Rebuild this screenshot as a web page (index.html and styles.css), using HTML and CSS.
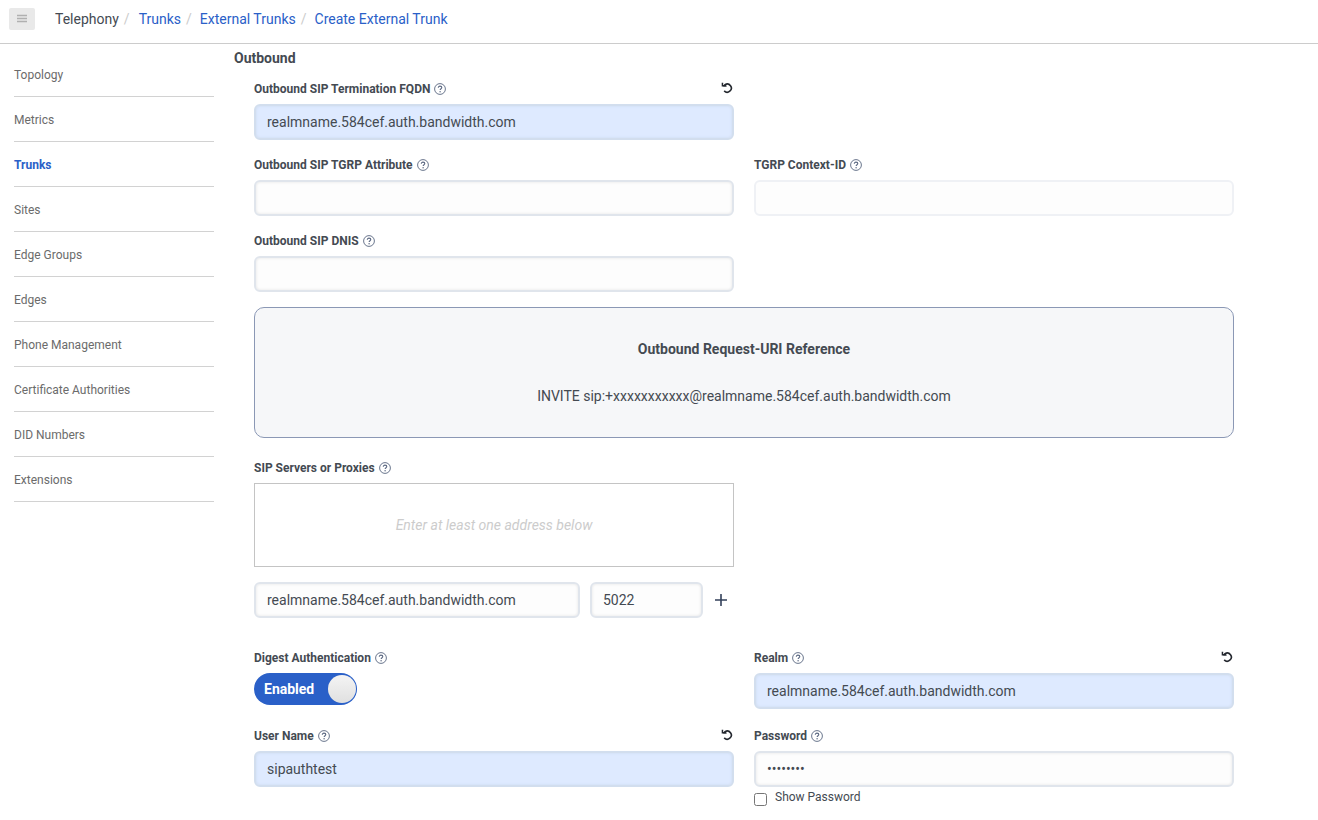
FILE: index.html
```html
<!DOCTYPE html>
<html lang="en">
<head>
<meta charset="utf-8">
<title>Create External Trunk</title>
<link rel="stylesheet" href="styles.css">
</head>
<body>
<svg class="sprite" aria-hidden="true">
  <symbol id="help" viewBox="0 0 12 12">
    <circle cx="6" cy="6" r="5.4" fill="none" stroke="currentColor" stroke-width="0.9"/>
    <path d="M4.3 4.8C4.3 3.7 5 3.1 6 3.1S7.8 3.7 7.8 4.6C7.8 5.7 6.1 5.8 6.1 7.1" fill="none" stroke="currentColor" stroke-width="1.1"/>
    <circle cx="6.1" cy="8.7" r="0.7" fill="currentColor"/>
  </symbol>
  <symbol id="undo" viewBox="0 0 12 12">
    <path d="M2.2 3.7H4.6L4 2.6A4.1 4.1 0 1 1 3.2 8.9" fill="none" stroke="currentColor" stroke-width="1.6"/>
    <path d="M0.7 0.8H2.2V3H4.9V4.6H0.7Z" fill="currentColor"/>
  </symbol>
</svg>
<header class="topbar">
  <button class="menu-button" type="button" aria-label="Menu">
    <svg viewBox="0 0 10 10" width="10" height="10"><path d="M0 1.5H10M0 4.5H10M0 7.5H10" stroke="currentColor" stroke-width="1.6"/></svg>
  </button>
  <nav aria-label="Breadcrumb">
    <ol class="breadcrumb">
      <li>Telephony</li>
      <li><a href="#">Trunks</a></li>
      <li><a href="#">External Trunks</a></li>
      <li><a href="#">Create External Trunk</a></li>
    </ol>
  </nav>
</header>
<div class="layout">
  <nav class="sidebar" aria-label="Telephony">
    <a href="#">Topology</a>
    <a href="#">Metrics</a>
    <a href="#" class="active" aria-current="page">Trunks</a>
    <a href="#">Sites</a>
    <a href="#">Edge Groups</a>
    <a href="#">Edges</a>
    <a href="#">Phone Management</a>
    <a href="#">Certificate Authorities</a>
    <a href="#">DID Numbers</a>
    <a href="#">Extensions</a>
  </nav>
  <main class="content">
    <h2 class="section-title">Outbound</h2>
    <form class="form">
      <div class="row">
        <div class="field">
          <div class="field-head">
            <label for="fqdn">Outbound SIP Termination FQDN</label>
            <svg class="help"><use href="#help"/></svg>
            <button class="reset" type="button" aria-label="Reset FQDN"><svg class="undo"><use href="#undo"/></svg></button>
          </div>
          <input id="fqdn" class="input changed" type="text" value="realmname.584cef.auth.bandwidth.com">
        </div>
      </div>
      <div class="row">
        <div class="field">
          <div class="field-head">
            <label for="tgrp">Outbound SIP TGRP Attribute</label>
            <svg class="help"><use href="#help"/></svg>
          </div>
          <input id="tgrp" class="input" type="text">
        </div>
        <div class="field">
          <div class="field-head">
            <label for="context">TGRP Context-ID</label>
            <svg class="help"><use href="#help"/></svg>
          </div>
          <input id="context" class="input" type="text" disabled>
        </div>
      </div>
      <div class="row">
        <div class="field">
          <div class="field-head">
            <label for="dnis">Outbound SIP DNIS</label>
            <svg class="help"><use href="#help"/></svg>
          </div>
          <input id="dnis" class="input" type="text">
        </div>
      </div>
      <section class="callout">
        <h3>Outbound Request-URI Reference</h3>
        <p>INVITE sip:+xxxxxxxxxxx@realmname.584cef.auth.bandwidth.com</p>
      </section>
      <div class="row servers">
        <div class="field">
          <div class="field-head">
            <label for="server">SIP Servers or Proxies</label>
            <svg class="help"><use href="#help"/></svg>
          </div>
          <div class="empty-list">Enter at least one address below</div>
          <div class="add-server">
            <input id="server" class="input" type="text" value="realmname.584cef.auth.bandwidth.com">
            <input class="input port" type="text" value="5022" aria-label="Port">
            <button class="add" type="button" aria-label="Add server">
              <svg viewBox="0 0 12 12" width="12" height="12"><path d="M6 0.5V11.5M0.5 6H11.5" stroke="currentColor" stroke-width="1.6" stroke-linecap="round"/></svg>
            </button>
          </div>
        </div>
      </div>
      <div class="row auth">
        <div class="field">
          <div class="field-head">
            <label for="digest">Digest Authentication</label>
            <svg class="help"><use href="#help"/></svg>
          </div>
          <button id="digest" class="toggle" type="button" role="switch" aria-checked="true">
            <span>Enabled</span><span class="knob"></span>
          </button>
        </div>
        <div class="field">
          <div class="field-head">
            <label for="realm">Realm</label>
            <svg class="help"><use href="#help"/></svg>
            <button class="reset" type="button" aria-label="Reset realm"><svg class="undo"><use href="#undo"/></svg></button>
          </div>
          <input id="realm" class="input changed" type="text" value="realmname.584cef.auth.bandwidth.com">
        </div>
      </div>
      <div class="row credentials">
        <div class="field">
          <div class="field-head">
            <label for="user">User Name</label>
            <svg class="help"><use href="#help"/></svg>
            <button class="reset" type="button" aria-label="Reset user name"><svg class="undo"><use href="#undo"/></svg></button>
          </div>
          <input id="user" class="input changed" type="text" value="sipauthtest">
        </div>
        <div class="field">
          <div class="field-head">
            <label for="password">Password</label>
            <svg class="help"><use href="#help"/></svg>
          </div>
          <input id="password" class="input" type="password" value="password">
          <div class="show-password">
            <input id="show" type="checkbox">
            <label for="show">Show Password</label>
          </div>
        </div>
      </div>
    </form>
  </main>
</div>
</body>
</html>
```
FILE: styles.css
```css
* { box-sizing: border-box; }

body {
  margin: 0;
  background: #fff;
  color: #444a52;
  font: 14px/20px Roboto, "Liberation Sans", sans-serif;
}

a { color: #2a60c8; text-decoration: none; }
button { padding: 0; border: 0; background: none; color: inherit; font: inherit; cursor: pointer; }
svg { display: block; }
.sprite { display: none; }

.topbar {
  display: flex;
  align-items: center;
  gap: 20px;
  padding: 8px 9px 13px;
  border-bottom: 1px solid #ccc;
}

.menu-button {
  display: grid;
  place-items: center;
  width: 26px;
  height: 22px;
  border-radius: 2px;
  background: #e9e9e9;
  color: #b0b0b0;
}

.breadcrumb { display: flex; margin: 0; padding: 0; list-style: none; }
.breadcrumb li + li::before { content: "/"; padding: 0 9px 0 5px; color: #ccc; }
.breadcrumb li + li + li::before { padding-right: 8px; }

.layout { display: flex; }

.sidebar { flex: 0 0 214px; padding: 8px 0 0 14px; }
.sidebar a {
  display: block;
  padding: 13px 0 11px;
  border-bottom: 1px solid #d2d2d2;
  color: #6b6b6b;
  font-size: 12px;
}
.sidebar .active { color: #2a60c8; font-weight: 700; }

.content { flex: 1; min-width: 0; padding: 4px 84px 12px 20px; }
.section-title { margin: 0; font-size: 14px; line-height: 20px; }
.form { padding-left: 20px; }

.row { display: grid; grid-template-columns: 1fr 1fr; gap: 20px; margin-top: 16px; }
.row:first-child { margin-top: 12px; }
.row.servers { margin-top: 21px; }
.row.auth { margin-top: 31px; }
.row.credentials { margin-top: 18px; }
.field { min-width: 0; }

.field-head {
  display: flex;
  align-items: center;
  gap: 4px;
  margin-bottom: 6px;
  font-size: 12px;
  font-weight: 700;
  line-height: 18px;
}
.help { width: 12px; height: 12px; color: #596680; }
.reset { margin-left: auto; padding: 0 1px 2px 0; color: #23272e; }
.undo { width: 12px; height: 12px; }

.input {
  display: block;
  width: 100%;
  min-width: 0;
  height: 36px;
  padding: 0 11px;
  border: 2px solid #e0e5ec;
  border-radius: 6px;
  background: #fdfdfd;
  box-shadow: inset 0 0 3px #e2e2e2;
  color: #444a52;
  font: inherit;
}
.input.changed { border-color: #d2deee; background: #deeaff; box-shadow: inset 0 0 3px #ccd9ed; }
.input:disabled { border-color: #eff1f5; box-shadow: none; }

.callout {
  margin-top: 15px;
  padding: 31px 20px;
  border: 1px solid #8b98b5;
  border-radius: 10px;
  background: #f6f7f9;
  text-align: center;
}
.callout h3 { margin: 0 0 27px; font-size: 14px; line-height: 20px; }
.callout p { margin: 0; }

.empty-list {
  padding: 31px 20px;
  border: 1px solid #c4c4c4;
  color: #ccc;
  font-style: italic;
  text-align: center;
}
.add-server { display: flex; align-items: center; gap: 10px; margin-top: 15px; }
.add-server .input { flex: 1; }
.add-server .port { flex: 0 0 113px; }
.add { padding: 1px 7px 1px 2px; color: #33405a; }

.toggle {
  display: flex;
  align-items: center;
  gap: 14px;
  height: 32px;
  padding: 0 1px 0 10px;
  border-radius: 16px;
  background: #2a60c8;
  color: #fff;
  font-weight: 700;
}
.knob {
  width: 28px;
  height: 28px;
  border-radius: 50%;
  background: linear-gradient(#f4f4f4, #e0e0e0);
}

.show-password { display: flex; gap: 8px; font-size: 12px; line-height: 20px; }
.show-password input { width: 13px; height: 13px; margin: 6px 0 0; }
```
